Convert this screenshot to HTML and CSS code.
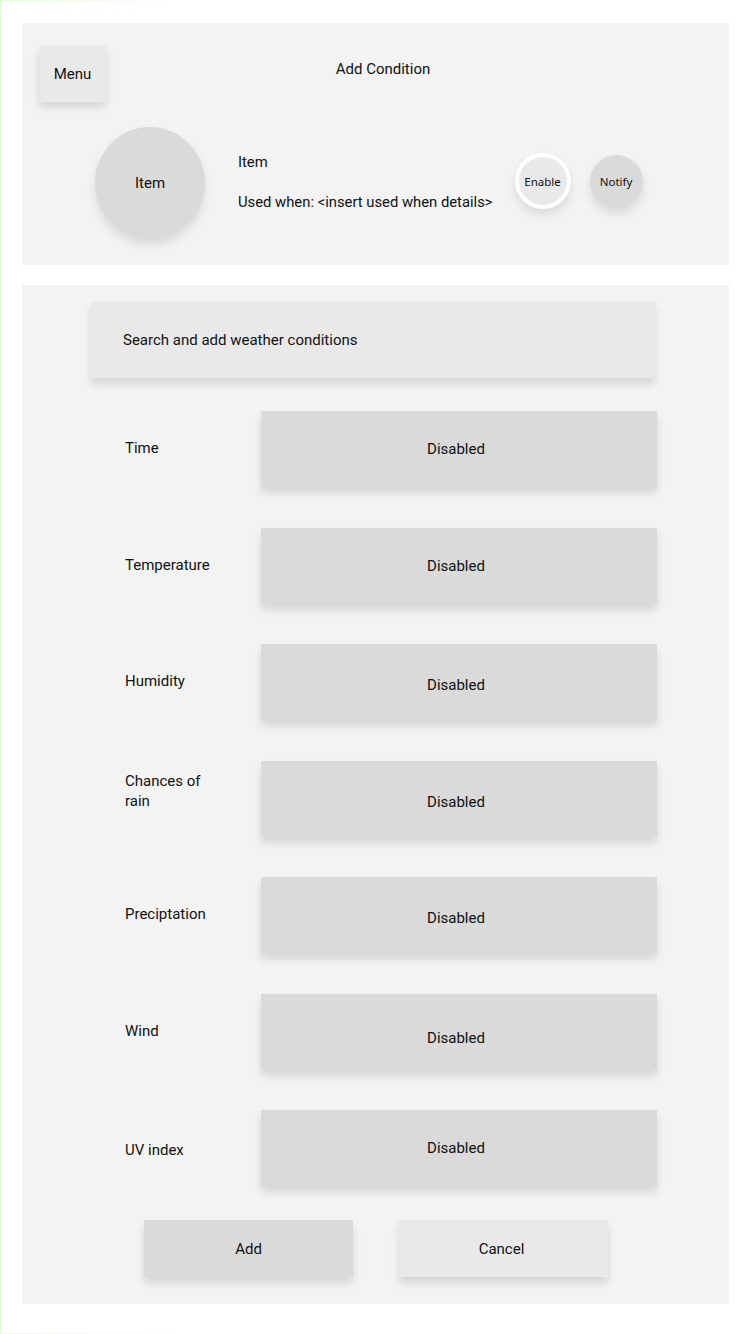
FILE: index.html
```html
<!DOCTYPE html>
<html>
<head>
<meta charset="utf-8">
<link rel="stylesheet" href="styles.css">
</head>
<body>
<div class="page">
  <section class="panel header">
    <div class="topbar">
      <div class="menu-btn">Menu</div>
      <div class="title">Add Condition</div>
    </div>
    <div class="item-row">
      <div class="item-circle">Item</div>
      <div class="item-text">
        <div class="item-name">Item</div>
        <div class="item-used">Used when: &lt;insert used when details&gt;</div>
      </div>
      <div class="round-btn enable">Enable</div>
      <div class="round-btn notify">Notify</div>
    </div>
  </section>
  <section class="panel body-panel">
    <div class="search">Search and add weather conditions</div>
    <div class="rows">
      <div class="label">Time</div><div class="box">Disabled</div>
      <div class="label">Temperature</div><div class="box">Disabled</div>
      <div class="label">Humidity</div><div class="box box-low">Disabled</div>
      <div class="label label-high">Chances of rain</div><div class="box box-low">Disabled</div>
      <div class="label">Preciptation</div><div class="box box-low">Disabled</div>
      <div class="label">Wind</div><div class="box box-lower">Disabled</div>
      <div class="label label-low">UV index</div><div class="box">Disabled</div>
    </div>
    <div class="actions">
      <div class="btn add">Add</div>
      <div class="btn cancel">Cancel</div>
    </div>
  </section>
</div>
</body>
</html>
```
FILE: styles.css
```css
* { box-sizing: border-box; }
html, body { margin: 0; padding: 0; background: #ffffff; }
body {
  font-family: "Source Sans Pro", Roboto, "Liberation Sans", sans-serif;
  font-size: 15px;
  color: #111;
}
.page {
  width: 751px;
  height: 1334px;
  padding: 23px 22px 30px 22px;
  display: flex;
  flex-direction: column;
  gap: 20px;
  border-left: 1px solid #dcfdd2;
  background:
    linear-gradient(to right, #e4fddc, rgba(255,255,255,0) 180px) top left / 100% 1px no-repeat,
    linear-gradient(to right, #e4fddc, rgba(255,255,255,0) 180px) bottom left / 100% 1px no-repeat,
    #ffffff;
}
.panel {
  background: #f3f3f3;
  width: 707px;
}
.header {
  height: 242px;
  padding: 23px 17px 0 17px;
  margin-left: -1px;
}
.topbar {
  display: grid;
  grid-template-columns: 67px 1fr 67px;
  align-items: start;
}
.menu-btn {
  height: 56px;
  background: #e9e9e9;
  display: flex;
  align-items: center;
  justify-content: center;
  box-shadow: 0 5px 8px rgba(0,0,0,0.13);
}
.title {
  text-align: center;
  padding-left: 15px;
  padding-top: 14px;
}
.item-row {
  display: flex;
  align-items: center;
  margin-top: 25px;
  padding-left: 56px;
}
.item-circle {
  width: 110px;
  height: 112px;
  border-radius: 50%;
  background: #dadada;
  display: flex;
  align-items: center;
  justify-content: center;
  box-shadow: 0 6px 10px rgba(0,0,0,0.1);
  flex-shrink: 0;
}
.item-text {
  margin-left: 33px;
  display: flex;
  flex-direction: column;
  gap: 22px;
  margin-top: -3px;
  font-size: 14.8px;
}
.round-btn {
  border-radius: 50%;
  display: flex;
  align-items: center;
  justify-content: center;
  font-family: "Noto Sans", sans-serif;
  font-size: 11.5px;
  margin-top: -4px;
  flex-shrink: 0;
}
.enable {
  width: 56px;
  height: 56px;
  background: #e9e9e9;
  border: 4px solid #ffffff;
  margin-left: 22px;
  box-shadow: 0 6px 10px rgba(0,0,0,0.1);
}
.notify {
  width: 53px;
  height: 53px;
  background: #dadada;
  margin-left: 19px;
  box-shadow: 0 6px 10px rgba(0,0,0,0.1);
}
.body-panel {
  height: 1019px;
  padding: 17px 0 0 0;
  margin-left: -1px;
}
.search {
  width: 564px;
  height: 76px;
  margin-left: 69px;
  background: #e9e9e9;
  padding-left: 32px;
  display: flex;
  align-items: center;
  box-shadow: 0 6px 8px rgba(0,0,0,0.12);
}
.rows {
  display: grid;
  grid-template-columns: 90px 396px;
  column-gap: 46px;
  row-gap: 40.5px;
  margin-top: 33px;
  margin-left: 103px;
}
.label {
  align-self: center;
  line-height: 20px;
  margin-top: -2px;
}
.label-high { margin-top: -16px; }
.label-low { margin-top: 4px; }
.box {
  height: 76px;
  background: #dadada;
  display: flex;
  align-items: center;
  justify-content: center;
  padding-right: 6px;
  box-shadow: 0 6px 8px rgba(0,0,0,0.12);
}
.box-low { padding-top: 6px; }
.box-lower { padding-top: 12px; }
.actions {
  display: flex;
  gap: 46px;
  margin-top: 34px;
  margin-left: 122px;
}
.btn {
  width: 209px;
  height: 57px;
  display: flex;
  align-items: center;
  justify-content: center;
  padding-top: 1px;
  box-shadow: 0 6px 8px rgba(0,0,0,0.12);
}
.add { background: #dadada; }
.cancel { background: #e9e9e9; padding-right: 4px; }
```
